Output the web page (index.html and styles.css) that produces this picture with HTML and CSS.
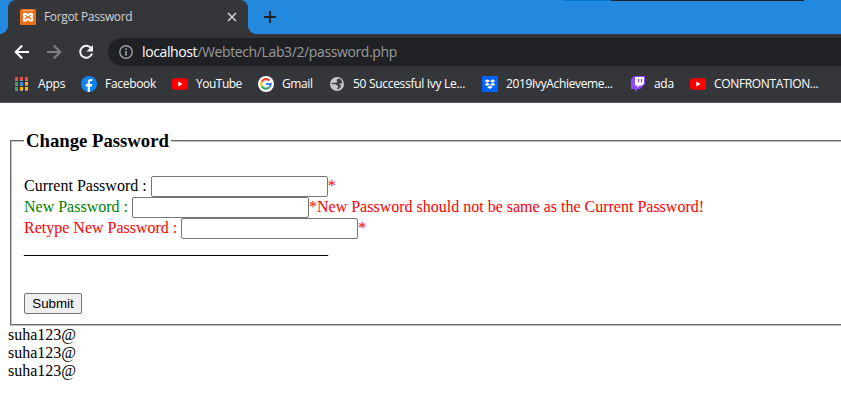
FILE: index.html
```html
<!DOCTYPE html>
<html lang="en">
<head>
<meta charset="utf-8">
<title>Forgot Password</title>
<link rel="stylesheet" href="styles.css">
</head>
<body>
<div class="browser">
  <div class="tabstrip">
    <div class="window-edge"></div>
    <div class="tab">
      <svg class="icon" viewBox="0 0 16 16"><rect width="16" height="16" rx="1.5" fill="#ea711b"/><path d="M3 1.500h10" stroke="#f6b383"/><path d="M5 4.700C3.500 4.700 3 6.800 5 8c-2 1.200-1.500 3.800 0 3.800 1.700 0 2.200-1.800 3-1.800s1.300 1.800 3 1.800c1.500 0 2-2.600 0-3.800 2-1.200 1.500-3.300 0-3.300-1.700 0-2.200 1.600-3 1.600s-1.300-1.600-3-1.600z" fill="#ea711b" stroke="#fff" stroke-width="2"/></svg>
      <span class="tab-title">Forgot Password</span>
      <svg class="close" viewBox="0 0 10 10"><path d="M1 1l8 8M9 1L1 9" stroke="#d6d7d9" stroke-width="1.500"/></svg>
    </div>
    <svg class="plus" viewBox="0 0 12 12"><path d="M6 0v12M0 6h12" stroke="#202124" stroke-width="2"/></svg>
  </div>
  <div class="toolbar">
    <svg class="nav" viewBox="0 0 16 16"><path d="M15 8H2M8.200 1.500L1.700 8l6.500 6.500" fill="none" stroke="#fff" stroke-width="2"/></svg>
    <svg class="nav" viewBox="0 0 16 16"><path d="M1 8h13M7.800 1.500L14.300 8l-6.500 6.500" fill="none" stroke="#808184" stroke-width="2"/></svg>
    <svg class="nav" viewBox="0 0 16 16"><path d="M13.300 4.500A6 6 0 1 0 14 9.500" fill="none" stroke="#f1f3f4" stroke-width="2"/><path d="M15 1v6.500H8.500z" fill="#f1f3f4"/></svg>
    <div class="address">
      <svg class="info" viewBox="0 0 14 14"><circle cx="7" cy="7" r="6.200" fill="none" stroke="#9aa0a6" stroke-width="1.400"/><path d="M7 3.300v1.600M7 6.100v4.600" stroke="#9aa0a6" stroke-width="1.600"/></svg>
      <span class="host">localhost</span><span class="path">/Webtech/Lab3/2/password.php</span>
    </div>
  </div>
  <div class="bookmarks">
    <div class="bm apps"><svg class="icon-apps" viewBox="0 0 13 14"><path d="M0 1.500h3M5 1.500h3M10 1.500h3" stroke="#f34b43" stroke-width="3"/><path d="M0 6.500h3M0 11.500h3" stroke="#34a853" stroke-width="3"/><path d="M5 6.500h3" stroke="#2f8cf5" stroke-width="3"/><path d="M10 6.500h3M5 11.500h3M10 11.500h3" stroke="#fbb80a" stroke-width="3"/><path d="M0 3.500h3M5 3.500h3M10 3.500h3M0 8.500h3M5 8.500h3M10 8.500h3M0 13.500h3M5 13.500h3M10 13.500h3" stroke="#8b8c8e"/></svg><span>Apps</span></div>
    <div class="bm facebook"><svg class="icon" viewBox="0 0 16 16"><circle cx="8" cy="8" r="8" fill="#1183f3"/><path d="M6.700 16v-5.600h-2V8h2V6.300c0-2.200 1.200-3.300 3-3.300l1.600.1v2h-1c-1 0-1.300.5-1.300 1.300V8h2.200l-.4 2.400H9V16z" fill="#fff"/></svg><span>Facebook</span></div>
    <div class="bm youtube"><svg class="icon" viewBox="0 0 16 16"><rect y="2.300" width="16" height="11.500" rx="2.700" fill="#f00"/><path d="M6.300 5.600v4.900L10.500 8z" fill="#fff"/></svg><span>YouTube</span></div>
    <div class="bm gmail"><svg class="icon" viewBox="0 0 16 16"><circle cx="8" cy="8" r="8" fill="#fff"/><g fill="none" stroke-width="2.200"><path d="M11.500 4.600A4.800 4.800 0 0 0 3.800 5.700" stroke="#ea4335"/><path d="M3.800 5.700a4.800 4.800 0 0 0 0 4.600" stroke="#fbbc05"/><path d="M3.800 10.300a4.800 4.800 0 0 0 7.300 1.200" stroke="#34a853"/><path d="M11.100 11.500A4.800 4.800 0 0 0 12.800 8H8" stroke="#4285f4"/></g></svg><span>Gmail</span></div>
    <div class="bm ivy"><svg class="icon" viewBox="0 0 16 16"><circle cx="8" cy="8" r="7" fill="#c4c7cb"/><path d="M10.500 2.500C8 3 7 4 8 5.200S6.500 7 5 6.700 2.500 7.500 2.500 8.500c2-.8 4-.8 4.700.2s2 .4 2 1.500-1.300 2-1.200 3.300c1.700-.3 3.500-1.500 4-3.500-.2-1-1-1.700-2-1.700 1-1.300 2.500-1.300 3.400-.6-.2-1.800-1-4-2.900-5.200z" fill="#3b3d40"/></svg><span>50 Successful Ivy Le...</span></div>
    <div class="bm dropbox"><svg class="icon" viewBox="0 0 16 16"><rect width="16" height="16" fill="#0061fe"/><path d="M5.300 3.300L8 5 5.300 6.700 2.600 5zM10.700 3.300L13.400 5l-2.700 1.700L8 5zM5.300 6.700L8 8.400l-2.700 1.700-2.700-1.700zM10.700 6.700l2.700 1.700-2.700 1.700L8 8.400zM8 9.500l2.700 1.700L8 13l-2.700-1.800z" fill="#fff"/></svg><span>2019IvyAchieveme...</span></div>
    <div class="bm twitch"><svg class="icon" viewBox="0 0 16 16"><path d="M4 0h11v8l-5 5H8l-3 3v-3H1V3z" fill="#9146ff"/><path d="M5 1h9v6.500l-2 2H9.500l-2 2v-2H5z" fill="#fff"/><path d="M8.500 3v3.500M11.500 3v3.500" stroke="#9146ff" stroke-width="1.200"/></svg><span>ada</span></div>
    <div class="bm confrontation"><svg class="icon" viewBox="0 0 16 16"><rect y="2.300" width="16" height="11.500" rx="2.700" fill="#f00"/><path d="M6.300 5.600v4.900L10.500 8z" fill="#fff"/></svg><span>CONFRONTATION...</span></div>
  </div>
</div>
<main>
  <form>
    <fieldset>
      <legend>Change Password</legend>
      <div class="row"><label>Current Password :&nbsp;</label><input type="password"><span class="red">*</span></div>
      <div class="row"><label class="green">New Password :&nbsp;</label><input type="password"><span class="red">*New Password should not be same as the Current Password!</span></div>
      <div class="row"><label class="red">Retype New Password :&nbsp;</label><input type="password"><span class="red">*</span></div>
      <div class="rule">______________________________________</div>
      <button type="button">Submit</button>
    </fieldset>
  </form>
  <div class="output">suha123@<br>suha123@<br>suha123@</div>
</main>
</body>
</html>
```

FILE: styles.css
```css
* { box-sizing: border-box; }
html, body { margin: 0; height: 411px; overflow: hidden; background: #fff; }
body { font: 16px/18px "Liberation Serif", serif; color: #000; }
svg { display: block; flex: none; }
.browser { height: 103px; background: #35363a; border-bottom: 1px solid #5b5c60; font-family: "Open Sans", sans-serif; white-space: nowrap; }
.tabstrip { position: relative; height: 34px; background: #2389df; display: flex; padding-left: 8px; }
.window-edge { position: absolute; top: 0; left: 563px; width: 241px; height: 1px; background: linear-gradient(to right, #0078d7 48px, #202124 48px); }
.tab { position: relative; width: 240px; height: 34px; padding: 0 11px 0 12px; border-radius: 8px 8px 0 0; background: #35363a; display: flex; align-items: center; }
.tab::before, .tab::after { content: ""; position: absolute; bottom: 0; width: 8px; height: 8px; }
.tab::before { left: -8px; background: radial-gradient(circle at 0 0, transparent 7.5px, #35363a 8px); }
.tab::after { right: -8px; background: radial-gradient(circle at 100% 0, transparent 7.5px, #35363a 8px); }
.icon { width: 16px; height: 16px; }
.tab-title { margin-left: 8px; font-size: 12px; letter-spacing: -.35px; color: #d2d3d5; }
.close { width: 10px; height: 10px; margin-left: auto; margin-right: 0; }
.plus { width: 12px; height: 12px; margin: 11px 0 0 16px; }
.toolbar { height: 36px; display: flex; align-items: center; padding-left: 14px; gap: 16px; }
.nav { width: 16px; height: 16px; }
.address { flex: 1; height: 28px; margin-left: -2px; padding-left: 11px; border-radius: 14px 0 0 14px; background: #202124; display: flex; align-items: center; font-size: 14px; letter-spacing: -.38px; }
.info { width: 14px; height: 14px; margin-right: 9px; }
.host { color: #fff; }
.path { color: #9a9b9d; }
.bookmarks { height: 32px; padding-left: 15px; display: flex; align-items: center; margin-top: -2px; gap: 16px; font-size: 12px; color: #fff; }
.bm { display: flex; align-items: center; gap: 8px; flex: none; }
.apps { width: 50px; gap: 10px; letter-spacing: -.2px; }
.icon-apps { width: 13px; height: 14px; }
.facebook { width: 75px; letter-spacing: -.3px; }
.youtube { width: 70px; letter-spacing: -.5px; }
.gmail { width: 55px; letter-spacing: -.4px; }
.ivy { width: 137px; letter-spacing: -.3px; }
.dropbox { width: 132px; letter-spacing: -.35px; }
.twitch { width: 44px; letter-spacing: -.3px; }
.confrontation { width: 130px; letter-spacing: -.35px; }
main { padding: 28px 0 0 8px; }
fieldset { height: 195px; margin: 0 -2px 0 2px; padding: 0 12px; border: 2px groove #c0c0c0; border-right: 0; white-space: nowrap; }
legend { height: 20px; padding: 0 2px; font-size: 18.72px; line-height: 20px; font-weight: bold; }
.row { height: 21px; display: flex; line-height: 20px; }
legend + .row { margin-top: 25px; }
input { width: 177px; height: 21px; margin: 0; padding: 1px 2px; border: 1px solid #767676; border-radius: 2px; background: #fff; }
.red { color: #f00; }
.green { color: #008000; }
.rule { margin-top: 1px; height: 18px; }
button { display: block; width: 58px; height: 21px; margin-top: 35px; padding: 0; border: 1px solid #767676; border-radius: 2px; background: #efefef; color: #000; font: 13.333px "Liberation Sans", sans-serif; }
```
